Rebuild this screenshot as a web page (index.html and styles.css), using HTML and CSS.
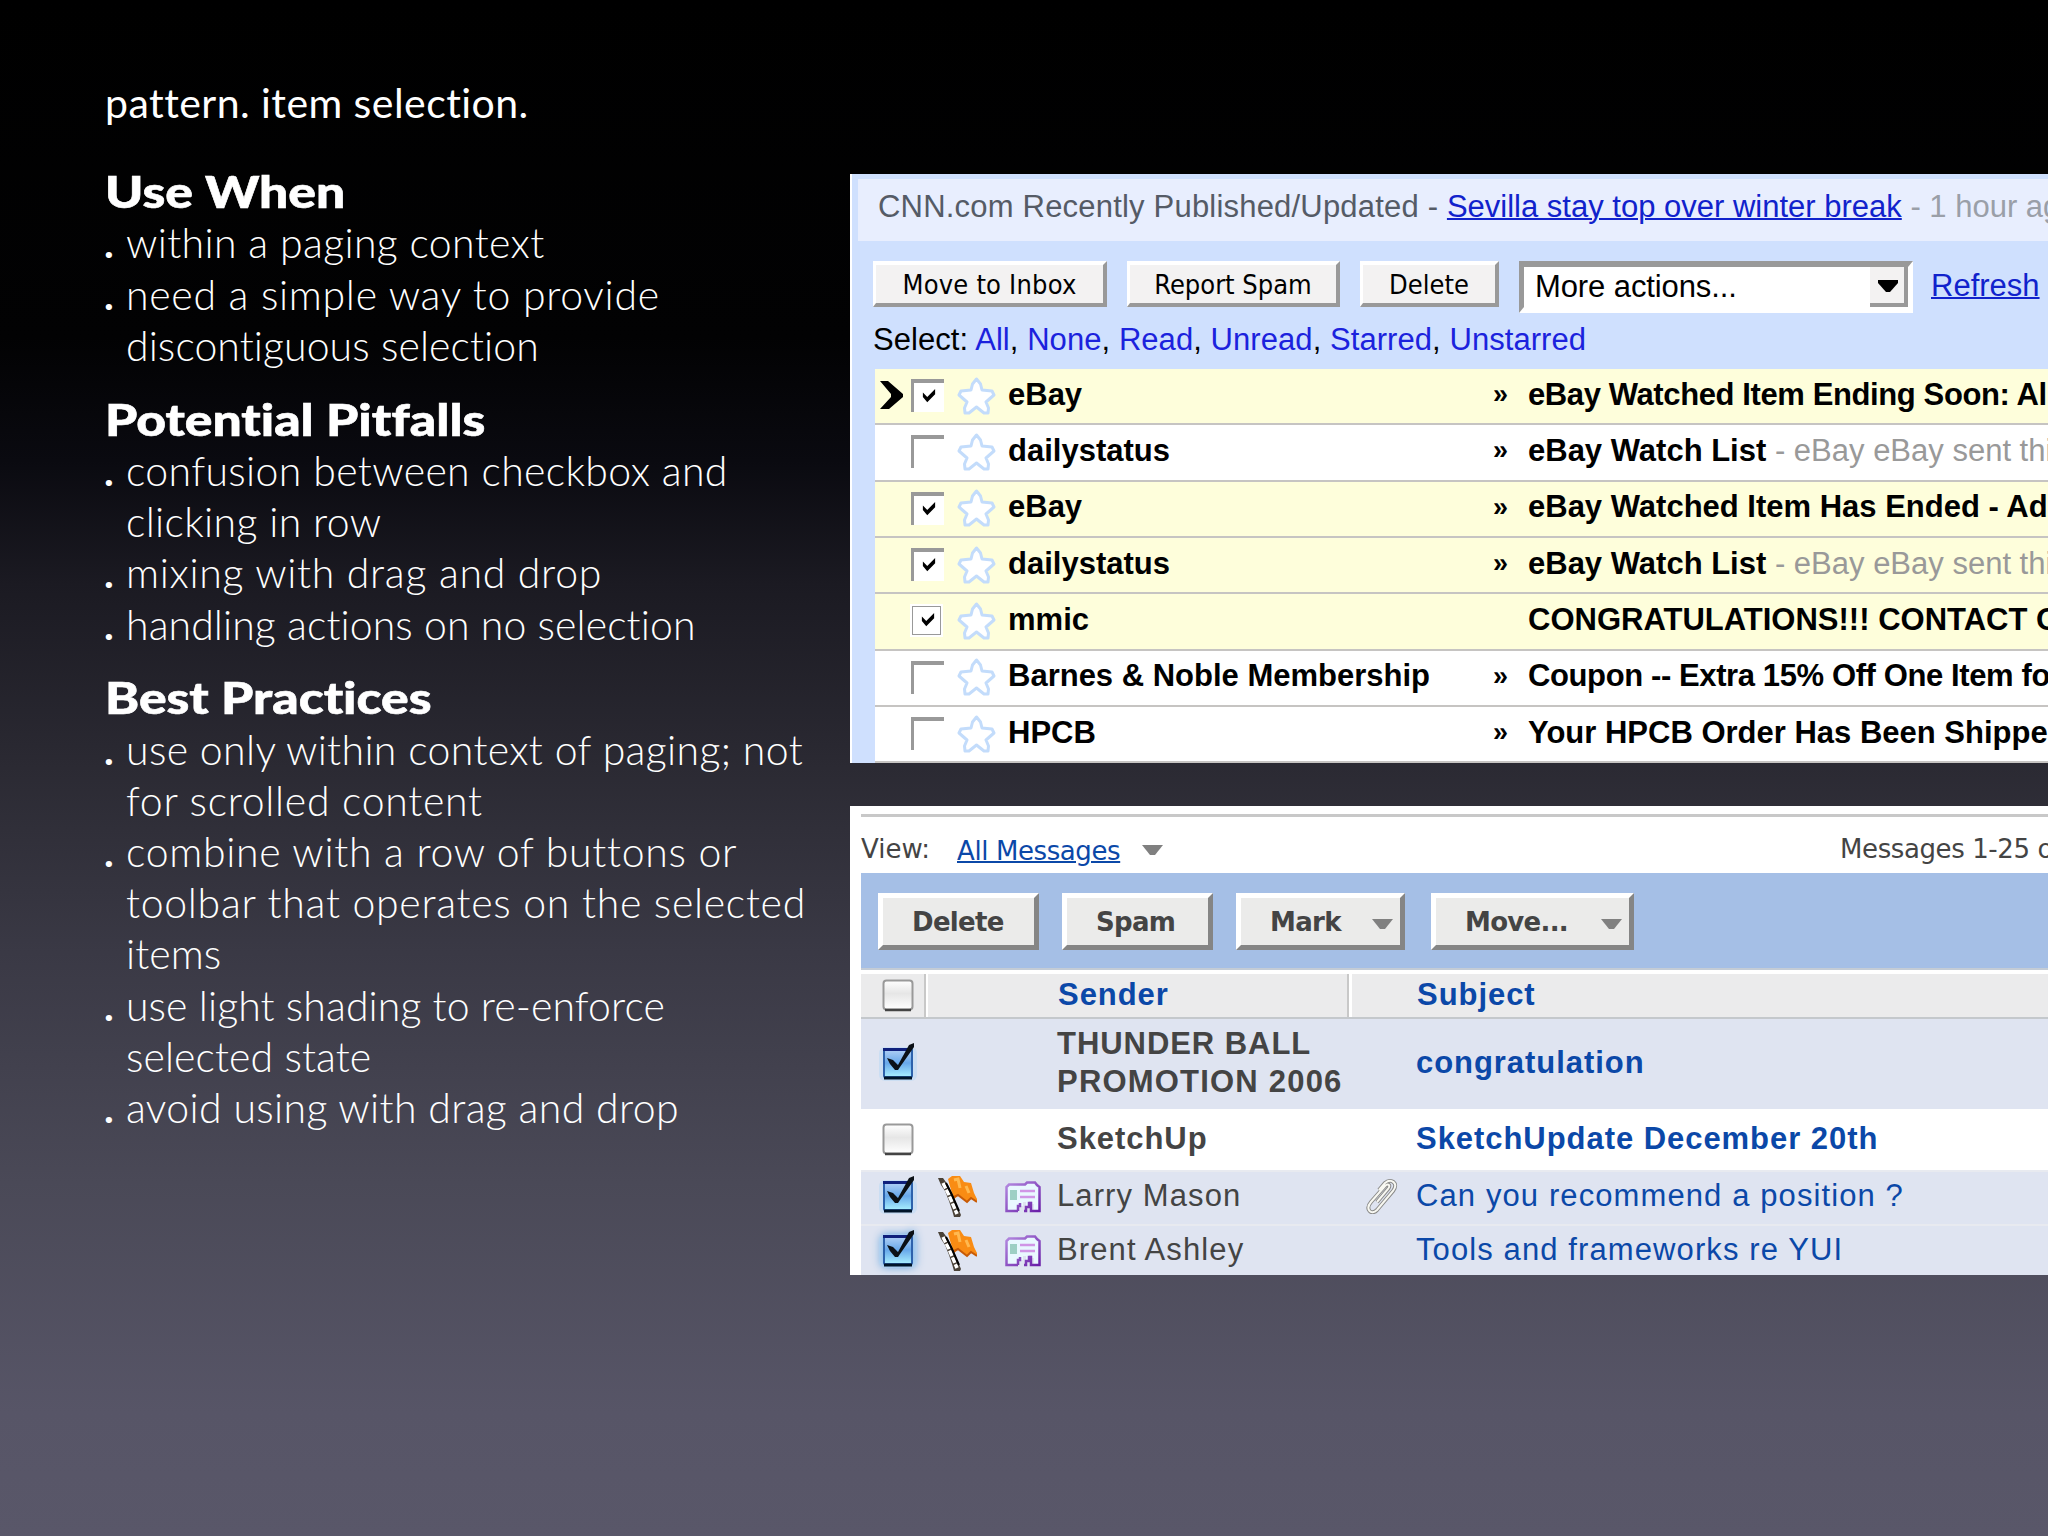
FILE: index.html
```
<!DOCTYPE html>
<html>
<head>
  <meta charset="utf-8">
  <title>pattern. item selection.</title>
  <link rel="stylesheet" href="styles.css">
</head>
<body>
  <svg class="defs" width="0" height="0">
    <defs>
      <linearGradient id="offFill" x1="0" y1="0" x2="0" y2="1">
        <stop offset="0" stop-color="#fff"/>
        <stop offset=".45" stop-color="#e6e6e6"/>
        <stop offset="1" stop-color="#fff"/>
      </linearGradient>
      <linearGradient id="onFill" x1="0" y1="0" x2="0" y2="1">
        <stop offset="0" stop-color="#b4d2f6"/>
        <stop offset=".5" stop-color="#68a8ea"/>
        <stop offset="1" stop-color="#a9f0ff"/>
      </linearGradient>
      <linearGradient id="cardEdge" x1="0" y1="0" x2="1" y2="1">
        <stop offset="0" stop-color="#b48ae0"/>
        <stop offset="1" stop-color="#6a1fa8"/>
      </linearGradient>
      <symbol id="star" viewBox="0 0 39 39">
        <path d="M19.500 2L23.500 7L25 13L35 14L37 18L29 25L31.500 31L31 36H27L19.500 30L12 36H8L7.500 31L10 25L2 18L4 14L14 13L15.500 7Z" fill="#fff" stroke="#c3dcfb" stroke-width="3" stroke-linejoin="round"/>
      </symbol>
      <symbol id="tick" viewBox="0 0 16 16">
        <path d="M1 4L6 9L15 0V6L6 15L1 9Z" fill="#000"/>
      </symbol>
      <symbol id="off" viewBox="0 0 40 44">
        <rect x="5.500" y="5.500" width="29" height="29" rx="3" fill="url(#offFill)" stroke="#999" stroke-width="2"/>
        <path d="M7 35H33" stroke="#444" stroke-width="2.500"/>
      </symbol>
      <symbol id="on" viewBox="0 0 40 44">
        <rect x="1" y="5" width="38" height="34" rx="6" fill="#b4d6f6" opacity=".45"/>
        <rect x="6" y="7" width="28" height="28" rx="1" fill="url(#onFill)" stroke="#2d62ac" stroke-width="2"/>
        <path d="M5 7.500H31" stroke="#10207c" stroke-width="3"/>
        <path d="M6 36H34" stroke="#001428" stroke-width="3"/>
        <path d="M9 16L15 18L20 23L31 3L36 1V5L22 25L20 28L17 28L12 22Z" fill="#0b1016"/>
      </symbol>
      <symbol id="flag" viewBox="0 0 39 41">
        <path d="M10 3L14 0H22L26 6L33 7L36 17L39 23V26L33 22L29 26L21 19L16 23L13 14Z" fill="#f98c14"/>
        <path d="M14 22L20 19L29 26L33 22L39 26" fill="none" stroke="#c75a06" stroke-width="2"/>
        <path d="M16 4L20 3L22 12M28 10L31 17" fill="none" stroke="#ffb950" stroke-width="3"/>
        <path d="M0 2H5L10 9L14 17L18 27L23 39L22 41H16L14 34L11 25L7 15L3 9Z" fill="#4a4238"/>
        <path d="M5 7L11 19L19 38" fill="none" stroke="#fff" stroke-width="3.500" stroke-dasharray="6 1.500"/>
        <path d="M8 7L14 19L21 35" fill="none" stroke="#000" stroke-width="2"/>
      </symbol>
      <symbol id="card" viewBox="0 0 36 32">
        <path d="M1.500 30V6L4 3.500H20L22 1.500H30L32 4L34.500 6V30H29V23H27V20H24V25H21V21H18V25H14V30Z" fill="#e9f8ff" stroke="none"/>
        <path d="M13 30H1.500V6L4 3.500H20L22 1.500H30L32 4L34.500 6V30H26V22H24V26H21V30H19M13 30V25H15V22" fill="none" stroke="url(#cardEdge)" stroke-width="2.500"/>
        <path d="M5 9H12V19H5Z" fill="#9dcfc4"/>
        <path d="M15 10H30M15 16H30" stroke="#d096e6" stroke-width="2.500"/>
      </symbol>
      <symbol id="clip" viewBox="0 0 32 35">
        <path d="M11 23L22 10C25 6 22 4 19 7L5 23C-1 30 5 37 11 31L27 12C33 4 25 -1 19 4L13 11" fill="none" stroke="#8a8a88" stroke-width="4"/>
        <path d="M11 23L22 10C25 6 22 4 19 7L5 23C-1 30 5 37 11 31L27 12C33 4 25 -1 19 4L13 11" fill="none" stroke="#f8f8f2" stroke-width="2"/>
      </symbol>
    </defs>
  </svg>

  <div class="slide">
    <div class="notes">
      <h1>pattern. item selection.</h1>

      <h2>Use When</h2>
      <ul>
        <li>within a paging context</li>
        <li><span class="wide">need a simple way to provide</span><br><span class="tight">discontiguous selection</span></li>
      </ul>

      <h2>Potential Pitfalls</h2>
      <ul>
        <li>confusion between checkbox and<br>clicking in row</li>
        <li class="wide">mixing with drag and drop</li>
        <li class="tight">handling actions on no selection</li>
      </ul>

      <h2>Best Practices</h2>
      <ul>
        <li>use only within context of paging; not<br><span class="wide">for scrolled content</span></li>
        <li class="wide">combine with a row of buttons or<br>toolbar that operates on the selected<br><span class="tight">items</span></li>
        <li class="tight">use light shading to re-enforce<br>selected state</li>
        <li>avoid using with drag and drop</li>
      </ul>
    </div>

    <div class="shots">
      <div class="gmail">
        <div class="clip-bar"><span class="feed">CNN.com Recently Published/Updated -</span> <a href="#">Sevilla stay top over winter break</a> <span class="ago">- 1 hour ago</span></div>
        <div class="actions">
          <button class="g-btn inbox">Move to Inbox</button>
          <button class="g-btn spam">Report Spam</button>
          <button class="g-btn delete">Delete</button>
          <div class="g-select">More actions...<i><svg width="20" height="12" viewBox="0 0 20 12"><path d="M0 0H20V3L12 12H8L0 3Z"/></svg></i></div>
          <a href="#">Refresh</a>
        </div>
        <div class="select-line">Select: <b>All</b>, <b>None</b>, <b>Read</b>, <b>Unread</b>, <b>Starred</b>, <b>Unstarred</b></div>
        <div class="g-list">
          <div class="g-row sel">
            <svg class="cursor" viewBox="0 0 23 28"><path d="M0 0H8L23 13V16L9 28H0L11 16V13Z"/></svg>
            <span class="box"><svg><use href="#tick"/></svg></span>
            <svg class="star"><use href="#star"/></svg>
            <span class="from">eBay</span><span class="raquo">»</span>
            <span class="subj snug">eBay Watched Item Ending Soon: All</span>
          </div>
          <div class="g-row">
            <span class="box"></span>
            <svg class="star"><use href="#star"/></svg>
            <span class="from">dailystatus</span><span class="raquo">»</span>
            <span class="subj">eBay Watch List <em>- eBay eBay sent this</em></span>
          </div>
          <div class="g-row sel">
            <span class="box"><svg><use href="#tick"/></svg></span>
            <svg class="star"><use href="#star"/></svg>
            <span class="from">eBay</span><span class="raquo">»</span>
            <span class="subj">eBay Watched Item Has Ended - Add</span>
          </div>
          <div class="g-row sel">
            <span class="box"><svg><use href="#tick"/></svg></span>
            <svg class="star"><use href="#star"/></svg>
            <span class="from">dailystatus</span><span class="raquo">»</span>
            <span class="subj">eBay Watch List <em>- eBay eBay sent this</em></span>
          </div>
          <div class="g-row sel">
            <span class="box focus"><svg><use href="#tick"/></svg></span>
            <svg class="star"><use href="#star"/></svg>
            <span class="from">mmic</span><span class="raquo"></span>
            <span class="subj">CONGRATULATIONS!!! CONTACT OUR</span>
          </div>
          <div class="g-row">
            <span class="box"></span>
            <svg class="star"><use href="#star"/></svg>
            <span class="from">Barnes &amp; Noble Membership</span><span class="raquo">»</span>
            <span class="subj snug">Coupon -- Extra 15% Off One Item for</span>
          </div>
          <div class="g-row">
            <span class="box"></span>
            <svg class="star"><use href="#star"/></svg>
            <span class="from">HPCB</span><span class="raquo">»</span>
            <span class="subj">Your HPCB Order Has Been Shipped</span>
          </div>
        </div>
      </div>

      <div class="yahoo">
        <div class="view-bar">
          <span class="label">View:</span>
          <a href="#">All Messages</a>
          <svg class="tri"><path d="M0 0H21L13 10H8Z"/></svg>
          <span class="count">Messages 1-25 of</span>
        </div>
        <div class="toolbar">
          <button class="y-btn del">Delete</button>
          <button class="y-btn junk">Spam</button>
          <button class="y-btn mark">Mark<svg class="tri"><path d="M0 0H21L13 10H8Z"/></svg></button>
          <button class="y-btn move">Move...<svg class="tri"><path d="M0 0H21L13 10H8Z"/></svg></button>
        </div>
        <div class="y-row head">
          <span class="c-check"><svg><use href="#off"/></svg></span>
          <span class="c-from">Sender</span>
          <span class="c-subj">Subject</span>
        </div>
        <div class="y-row tall on">
          <span class="c-check"><svg><use href="#on"/></svg></span>
          <span class="c-flag"></span><span class="c-card"></span>
          <span class="c-from">THUNDER BALL<br><span class="promo">PROMOTION 2006</span></span>
          <span class="c-clip"></span>
          <span class="c-subj">congratulation</span>
        </div>
        <div class="y-row plain">
          <span class="c-check"><svg><use href="#off"/></svg></span>
          <span class="c-flag"></span><span class="c-card"></span>
          <span class="c-from">SketchUp</span>
          <span class="c-clip"></span>
          <span class="c-subj">SketchUpdate December 20th</span>
        </div>
        <div class="y-row on read">
          <span class="c-check"><svg><use href="#on"/></svg></span>
          <span class="c-flag"><svg><use href="#flag"/></svg></span>
          <span class="c-card"><svg><use href="#card"/></svg></span>
          <span class="c-from">Larry Mason</span>
          <span class="c-clip"><svg><use href="#clip"/></svg></span>
          <span class="c-subj">Can you recommend a position ?</span>
        </div>
        <div class="y-row on read last">
          <span class="c-check hover"><svg><use href="#on"/></svg></span>
          <span class="c-flag"><svg><use href="#flag"/></svg></span>
          <span class="c-card"><svg><use href="#card"/></svg></span>
          <span class="c-from">Brent Ashley</span>
          <span class="c-clip"></span>
          <span class="c-subj">Tools and frameworks re YUI</span>
        </div>
      </div>
    </div>
  </div>
</body>
</html>
```
FILE: styles.css
```
* {
  box-sizing: border-box;
}

body {
  margin: 0;
  width: 2048px;
  height: 1536px;
  overflow: hidden;
  background: linear-gradient(#000 0, #020203 22%, #0a0a10 30%, #1b1a22 38%, #2b2a33 50%, #3a3945 62%, #4a4957 77%, #575567 92%, #595769 100%);
  font-family: "Liberation Sans", Arial, sans-serif;
}

.defs {
  position: absolute;
}

a {
  color: #1122cc;
  text-decoration-thickness: 2px;
}

button {
  margin: 0;
  padding: 0;
}

.slide {
  display: flex;
  width: 2048px;
  height: 1536px;
  overflow: hidden;
}

/* left column */

.notes {
  flex: none;
  width: 850px;
  padding: 77px 0 0 105px;
  color: #fff;
  font-family: Lato, "Gill Sans", sans-serif;
  font-variant-ligatures: none;
  line-height: 51.2px;
  white-space: nowrap;
}

.notes h1 {
  margin: 0 0 38px;
  font-size: 41px;
  font-weight: 400;
  line-height: 51.2px;
  letter-spacing: .45px;
}

.notes h2 {
  width: 400px;
  margin: 0;
  font-size: 43px;
  font-weight: 900;
  line-height: 51.2px;
  transform: scaleX(1.2);
  transform-origin: 0 0;
  -webkit-text-stroke: .6px #fff;
}

.notes ul {
  margin: 0 0 22.7px;
  padding: 0 0 0 21px;
  list-style: none;
  font-size: 41px;
  font-weight: 300;
  letter-spacing: .35px;
}

.notes li::before {
  content: ".";
  float: left;
  margin-left: -22px;
  font-weight: 700;
}

.wide {
  letter-spacing: .7px;
}

.tight {
  letter-spacing: .08px;
}

/* right column */

.shots {
  flex: none;
  width: 1198px;
  padding-top: 174px;
  overflow: hidden;
  white-space: nowrap;
  font-size: 31px;
}

.gmail {
  height: 589px;
  border-left: 2px solid #fff;
  background: #cfe0fe;
  overflow: hidden;
}

.clip-bar {
  height: 62px;
  margin: 5px 0 0 6px;
  padding-left: 20px;
  background: #e8eefe;
  color: #555b66;
  line-height: 56px;
}

.feed {
  letter-spacing: .2px;
}

.ago {
  color: #9a9fa8;
}

.actions {
  display: flex;
  margin: 20px 0 0 21px;
  height: 52px;
}

.actions a {
  margin-left: 18px;
  line-height: 50px;
}

.g-btn {
  height: 46px;
  margin-right: 20px;
  padding-top: 1px;
  border: solid;
  border-width: 4px 4px 4px 3px;
  border-color: #fff #999 #999 #fff;
  background: #f3f2f2;
  font: 27px/36px "DejaVu Sans Condensed", "DejaVu Sans", sans-serif;
  font-stretch: condensed;
}

.inbox { width: 234px; letter-spacing: .2px; }
.spam { width: 213px; }
.delete { width: 139px; }

.g-select {
  display: flex;
  justify-content: space-between;
  width: 394px;
  height: 52px;
  padding-left: 11px;
  border: solid;
  border-width: 6px 5px 6px 5px;
  border-color: #999 #fff #fff #999;
  background: #fff;
  line-height: 39px;
  letter-spacing: -.1px;
}

.g-select i {
  width: 38px;
  height: 40px;
  padding: 13px 0 0 8px;
  border: solid;
  border-width: 0 4px 4px 0;
  border-color: #999;
  background: #f3f2f2;
  line-height: 0;
}

.select-line {
  height: 56px;
  padding-left: 21px;
  line-height: 54px;
  letter-spacing: .06px;
}

.select-line b {
  color: #1b22dd;
  font-weight: 400;
}

.g-list {
  display: grid;
  grid-template-rows: repeat(7, 56.33px);
  margin-left: 23px;
}

.g-row {
  display: flex;
  align-items: center;
  padding: 0 0 3px 36px;
  border-bottom: 2px solid #c6c4c2;
  background: #fff;
  font-weight: 700;
}

.g-row.sel {
  background: #fefedb;
}

.cursor {
  width: 23px;
  height: 28px;
  margin: 1px 8px 0 -31px;
}

.box {
  width: 33px;
  height: 33px;
  margin-top: 2px;
  padding: 6px 0 0 7px;
  border: solid;
  border-width: 4px 0 0 3px;
  border-color: #999;
  background: #fff;
  line-height: 0;
}

.box svg {
  width: 16px;
  height: 14px;
}

.g-row:not(.sel) .box {
  background: none;
}

.box.focus {
  width: 31px;
  height: 31px;
  margin-right: 2px;
  border-width: 2px;
  outline: 2px solid #fff;
  outline-offset: -1px;
}

.star {
  width: 39px;
  height: 39px;
  margin: 3px 12px 0 13px;
}

.from {
  width: 485px;
}

.raquo {
  width: 35px;
  font-size: 27px;
}

.snug {
  letter-spacing: -.39px;
}

.subj em {
  color: #999;
  font-style: normal;
  font-weight: 400;
}

/* second shot */

.yahoo {
  height: 469px;
  margin-top: 43px;
  padding: 8px 0 0 11px;
  background: #fff;
  color: #444;
  overflow: hidden;
}

.view-bar {
  display: flex;
  height: 59px;
  border-top: 3px solid #c8c8c8;
  font: 26px/65px "DejaVu Sans", Verdana, sans-serif;
  letter-spacing: -.4px;
}

.view-bar .label {
  flex: none;
  width: 96px;
  letter-spacing: 0;
}

.view-bar a {
  flex: none;
  width: 164px;
  color: #0b48a8;
  line-height: 68px;
}

.view-bar .tri {
  margin: 28px 0 0 21px;
}

.view-bar .count {
  margin-left: 677px;
}

.tri {
  flex: none;
  width: 21px;
  height: 11px;
  fill: #808080;
}

.toolbar {
  display: flex;
  height: 97px;
  padding: 20px 0 0 17px;
  border-bottom: 2px solid #c4ccd6;
  background: #a5bfe6;
}

.y-btn {
  display: flex;
  height: 57px;
  padding-left: 29px;
  border: 5px solid;
  border-color: #fff #858585 #858585 #fff;
  background: #ebebea;
  color: #444;
  font: 700 26px/49px "DejaVu Sans", Verdana, sans-serif;
  letter-spacing: -.7px;
}

.y-btn .tri {
  margin: 21px 0 0 auto;
}

.del { width: 161px; margin-right: 23px; }
.junk { width: 151px; margin-right: 23px; }
.mark { width: 169px; margin-right: 26px; padding-right: 7px; }
.move { width: 203px; padding-right: 7px; }

.y-row {
  display: flex;
  align-items: center;
  background: #fff;
  color: #444;
  font-weight: 700;
  line-height: 38.5px;
  letter-spacing: .95px;
}

.y-row.on {
  background: #dfe4f1;
}

.head {
  height: 49px;
  border-top: 4px solid #fff;
  border-bottom: 2px solid #c4c8cc;
  background: #ebebec;
  color: #0b48a8;
  line-height: 42px;
}

.head .c-check {
  width: 65px;
  border-right: 2px solid #c8c8c8;
}

.head .c-from {
  width: 423px;
  height: 100%;
  padding-left: 130px;
  border-left: 2px solid #fff;
  border-right: 2px solid #c8c8c8;
}

.head .c-subj {
  height: 100%;
  padding-left: 65px;
  border-left: 3px solid #fff;
}

.tall { height: 90px; padding-bottom: 2px; }
.plain { height: 61px; }
.read { height: 54px; padding-bottom: 4px; border-top: 2px solid #e8eaf0; font-weight: 400; letter-spacing: 1.1px; }
.last { height: 53px; padding-bottom: 3px; }

.promo {
  letter-spacing: 1.2px;
}

.y-row svg {
  display: block;
}

.c-check { width: 77px; padding-left: 17px; }
.c-check svg { width: 40px; height: 44px; }
.c-flag { width: 67px; }
.c-flag svg { width: 39px; height: 41px; }
.c-card { width: 52px; }
.c-card svg { width: 36px; height: 32px; }
.c-from { width: 309px; }
.c-clip { width: 50px; }
.c-clip svg { width: 32px; height: 35px; }
.c-subj { color: #0b48a8; }

.c-check svg, .c-card svg {
  position: relative;
  top: 1px;
}

.hover {
  filter: drop-shadow(0 0 4px #5aa0dc);
}
```
